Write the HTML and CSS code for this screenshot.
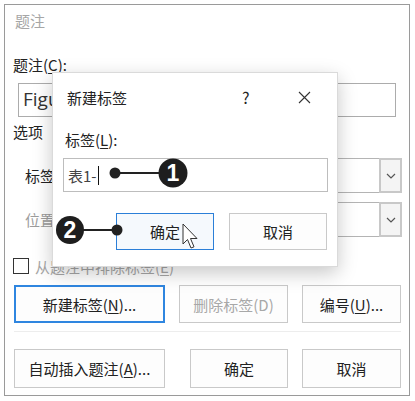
FILE: index.html
```html
<!DOCTYPE html>
<html lang="zh-CN">
<head>
    <meta charset="UTF-8">
    <title>题注</title>
    <link rel="stylesheet" href="styles.css">
</head>
<body>
    <div class="dialog">
        <div class="title">题注</div>
        <div class="label">题注(<u>C</u>):</div>
        <div class="caption-input">Figure 1</div>
        <div class="section">选项</div>

        <div class="opt-row first">
            <span class="opt-label">标签</span>
            <div class="select">
                <div class="select-box"></div>
                <div class="select-btn"><svg width="10" height="6" viewBox="0 0 10 6"><path d="M1 1l4 4 4-4" fill="none" stroke="#555" stroke-width="1.2"/></svg></div>
            </div>
        </div>
        <div class="opt-row">
            <span class="opt-label gray">位置</span>
            <div class="select">
                <div class="select-box"></div>
                <div class="select-btn"><svg width="10" height="6" viewBox="0 0 10 6"><path d="M1 1l4 4 4-4" fill="none" stroke="#555" stroke-width="1.2"/></svg></div>
            </div>
        </div>

        <div class="check-row">
            <span class="checkbox"></span>
            <span class="check-text">从题注中排除标签(<u>E</u>)</span>
        </div>

        <div class="btn-row">
            <button class="btn wide focus">新建标签(<u>N</u>)...</button>
            <button class="btn mid disabled">删除标签(D)</button>
            <button class="btn">编号(<u>U</u>)...</button>
        </div>
        <div class="sep"></div>
        <div class="btn-row second">
            <button class="btn wide">自动插入题注(<u>A</u>)...</button>
            <button class="btn mid2">确定</button>
            <button class="btn">取消</button>
        </div>

        <div class="popup">
            <div class="popup-head">
                <span class="popup-title">新建标签</span>
                <span class="help">?</span>
                <svg class="close" width="13" height="13" viewBox="0 0 13 13"><path d="M1 1l11 11M12 1L1 12" stroke="#333" stroke-width="1.1"/></svg>
            </div>
            <div class="popup-label">标签(<u>L</u>):</div>
            <div class="popup-input">表1-<span class="caret"></span></div>
            <div class="popup-btns">
                <button class="btn ok">确定</button>
                <button class="btn cancel">取消</button>
            </div>
        </div>
    </div>

    <svg class="marks" width="415" height="401" viewBox="0 0 415 401">
        <line x1="115" y1="173" x2="160" y2="173" stroke="#222" stroke-width="2"/>
        <circle cx="115" cy="173" r="5.5" fill="#222"/>
        <circle cx="173" cy="173" r="14.5" fill="#1e1e1e"/>
        <text x="173" y="181" class="num">1</text>

        <line x1="80" y1="230" x2="117" y2="230" stroke="#222" stroke-width="2"/>
        <circle cx="117" cy="230" r="5.5" fill="#222"/>
        <circle cx="70" cy="230" r="14" fill="#1e1e1e"/>
        <text x="70" y="238" class="num">2</text>

        <path d="M183 224 L183 244 L187.5 239.5 L191 248 L194 246.8 L190.5 238.5 L197 238.5 Z" fill="#fff" stroke="#333" stroke-width="1" stroke-linejoin="round"/>
    </svg>
</body>
</html>
```

FILE: styles.css
```css
body {
    margin: 0;
    background: #fff;
    font-family: "Noto Sans CJK SC", "Noto Sans", sans-serif;
    font-size: 15px;
    color: #222;
    width: 415px;
    height: 401px;
    position: relative;
    overflow: hidden;
}
u {
    text-decoration: underline;
    text-underline-offset: 2px;
}
.dialog {
    position: relative;
    box-sizing: border-box;
    margin: 4px;
    width: 406px;
    height: 392px;
    border: 1px solid #9a9a9a;
    background: #fff;
}
.title {
    padding: 6px 0 0 10px;
    line-height: 20px;
    color: #a6a6a6;
}
.label {
    margin-top: 24px;
    padding-left: 8px;
    line-height: 20px;
}
.caption-input {
    box-sizing: border-box;
    margin: 8px 0 0 13px;
    width: 378px;
    height: 34px;
    border: 1px solid #acacac;
    padding-left: 4px;
    font-family: "Open Sans", "Noto Sans", sans-serif;
    font-size: 19px;
    line-height: 31px;
    color: #333;
}
.section {
    margin-top: 5px;
    padding-left: 8px;
    line-height: 20px;
}
.opt-row {
    display: flex;
    align-items: center;
    margin-top: 9px;
    height: 35px;
}
.opt-row.first {
    margin-top: 16px;
}
.opt-label {
    width: 70px;
    padding-left: 20px;
    box-sizing: border-box;
}
.opt-label.gray {
    color: #9c9c9c;
}
.select {
    display: flex;
    height: 35px;
}
.select-box {
    box-sizing: border-box;
    width: 304px;
    border: 1px solid #b4b4b4;
    border-right: none;
}
.select-btn {
    box-sizing: border-box;
    width: 23px;
    border: 2px solid #c8c8c8;
    background: #f4f4f4;
    display: flex;
    align-items: center;
    justify-content: center;
}
.check-row {
    display: flex;
    align-items: center;
    margin-top: 19px;
    padding-left: 8px;
    height: 20px;
}
.checkbox {
    box-sizing: border-box;
    width: 16px;
    height: 16px;
    border: 1px solid #333;
    margin-right: 6px;
}
.check-text {
    opacity: .4;
}
.btn-row {
    display: flex;
    margin: 9px 0 0 9px;
    height: 38px;
}
.btn-row.second {
    margin-top: 17px;
    height: 39px;
}
.btn {
    box-sizing: border-box;
    height: 100%;
    width: 99px;
    border: 1px solid #c9c9c9;
    background: #fdfdfd;
    font-family: inherit;
    font-size: 15px;
    color: #222;
    padding: 0;
}
.btn.wide {
    width: 151px;
}
.btn.mid {
    width: 109px;
    margin: 0 14px;
}
.btn.mid2 {
    width: 98px;
    margin: 0 14px 0 25px;
}
.btn.focus {
    border: 2px solid #2f86e0;
}
.btn.disabled {
    color: #a8a8a8;
}
.sep {
    margin: 8px 8px 0 9px;
    height: 1px;
    background: #ededed;
}

.popup {
    position: absolute;
    left: 47px;
    top: 67px;
    box-sizing: border-box;
    width: 286px;
    height: 195px;
    background: #fff;
    border: 1px solid #dadada;
    box-shadow: 0 6px 18px rgba(0, 0, 0, .22);
}
.popup-head {
    display: flex;
    align-items: center;
    padding: 14px 0 0 14px;
    height: 20px;
}
.popup-title {
    width: 175px;
}
.help {
    width: 56px;
    font-size: 16px;
}
.close {
    margin-top: 1px;
}
.popup-label {
    margin-top: 23px;
    padding-left: 12px;
    line-height: 20px;
}
.popup-input {
    box-sizing: border-box;
    display: flex;
    align-items: center;
    margin: 8px 0 0 10px;
    width: 265px;
    height: 34px;
    border: 1px solid #bdbdbd;
    padding-left: 4px;
    color: #444;
}
.caret {
    display: inline-block;
    width: 1px;
    height: 19px;
    background: #111;
    margin-left: 1px;
}
.popup-btns {
    display: flex;
    margin: 21px 0 0 63px;
    height: 37px;
}
.btn.ok {
    width: 98px;
    border: 1px solid #2b7fd8;
    background: #f5f9fd;
}
.btn.cancel {
    width: 98px;
    margin-left: 15px;
}

.marks {
    position: absolute;
    left: 0;
    top: 0;
    pointer-events: none;
}
.num {
    fill: #fff;
    font-family: "Liberation Sans", sans-serif;
    font-weight: bold;
    font-size: 23px;
    text-anchor: middle;
}
```
